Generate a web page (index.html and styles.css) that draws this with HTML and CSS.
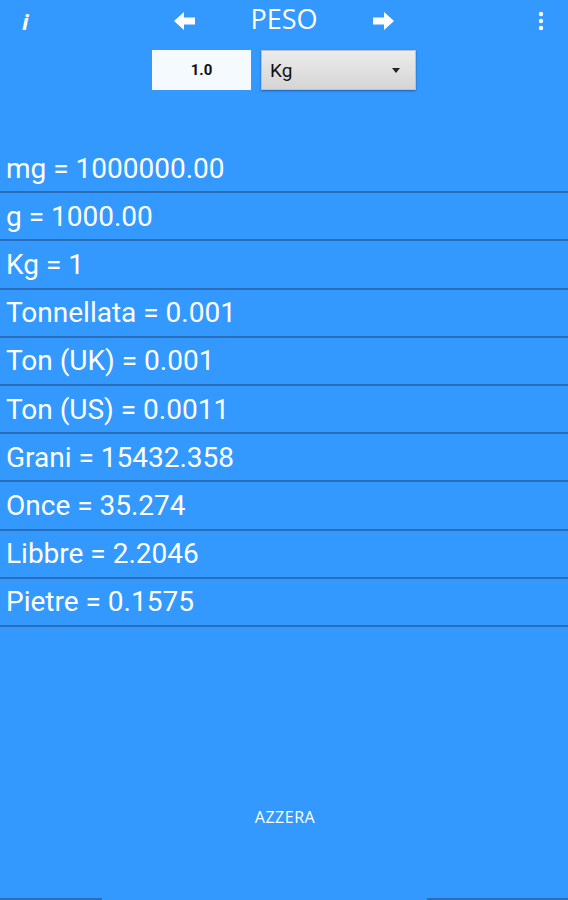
FILE: index.html
```html
<!DOCTYPE html>
<html lang="it">
<head>
    <meta charset="UTF-8">
    <meta name="viewport" content="width=device-width, initial-scale=1.0">
    <title>Peso</title>
    <link rel="stylesheet" href="styles.css">
</head>
<body>

    <!-- Top bar -->
    <div class="top-bar">
        <span class="info-btn">i</span>
        <div class="title-group">
            <svg class="arrow" width="22" height="18" viewBox="0 0 22 18">
                <path d="M0 9 L10 0 L10 5.5 L21 5.5 L21 12.5 L10 12.5 L10 18 Z" fill="#fff"/>
            </svg>
            <span class="title">PESO</span>
            <svg class="arrow" width="22" height="18" viewBox="0 0 22 18">
                <path d="M22 9 L12 0 L12 5.5 L1 5.5 L1 12.5 L12 12.5 L12 18 Z" fill="#fff"/>
            </svg>
        </div>
        <svg class="menu-btn" width="6" height="20" viewBox="0 0 6 20">
            <circle cx="3" cy="3" r="2.2" fill="#fff"/>
            <circle cx="3" cy="10" r="2.2" fill="#fff"/>
            <circle cx="3" cy="17" r="2.2" fill="#fff"/>
        </svg>
    </div>

    <!-- Input -->
    <div class="controls">
        <div class="value-box">1.0</div>
        <div class="unit-select">
            <span>Kg</span>
            <span class="caret"></span>
        </div>
    </div>

    <!-- Results -->
    <ul class="results">
        <li>mg = 1000000.00</li>
        <li>g = 1000.00</li>
        <li>Kg = 1</li>
        <li>Tonnellata = 0.001</li>
        <li>Ton (UK) = 0.001</li>
        <li>Ton (US) = 0.0011</li>
        <li>Grani = 15432.358</li>
        <li>Once = 35.274</li>
        <li>Libbre = 2.2046</li>
        <li>Pietre = 0.1575</li>
    </ul>

    <button class="reset-btn">AZZERA</button>

    <div class="bottom-edge">
        <span class="edge-left"></span>
        <span class="edge-right"></span>
    </div>

</body>
</html>
```

FILE: styles.css
```css
/* General */
html, body {
    height: 100%;
}

body {
    margin: 0;
    background: #3399ff;
    color: white;
    font-family: Roboto, sans-serif;
    display: flex;
    flex-direction: column;
}

/* Top bar */
.top-bar {
    height: 40px;
    display: flex;
    align-items: center;
    justify-content: space-between;
    padding: 0 24px 0 22px;
}

.info-btn {
    font-family: 'Open Sans', sans-serif;
    font-style: italic;
    font-weight: bold;
    font-size: 22px;
    width: 8px;
    line-height: 1;
    margin-top: 2px;
}

.title-group {
    display: flex;
    align-items: center;
}

.arrow {
    margin-top: 2px;
}

.title {
    font-family: 'Open Sans', sans-serif;
    font-size: 27px;
    width: 176px;
    text-align: center;
    line-height: 1;
    margin-top: -4px;
}

.menu-btn {
    margin-top: 2px;
}

/* Controls */
.controls {
    display: flex;
    justify-content: center;
    gap: 10px;
    margin-top: 10px;
}

.value-box {
    width: 99px;
    height: 40px;
    background: #f5faff;
    color: #111;
    font-family: Roboto, sans-serif;
    font-weight: bold;
    font-size: 15px;
    display: flex;
    align-items: center;
    justify-content: center;
}

.unit-select {
    width: 130px;
    height: 38px;
    background: linear-gradient(#ececec, #d5d5d5);
    border: 1px solid #b9c2cc;
    box-shadow: 0 1px 2px rgba(20, 60, 110, 0.6);
    color: #111;
    font-size: 19px;
    display: flex;
    align-items: center;
    justify-content: space-between;
    padding: 0 15px 0 8px;
}

.caret {
    width: 0;
    height: 0;
    border-left: 4.5px solid transparent;
    border-right: 4.5px solid transparent;
    border-top: 5px solid #222;
}

/* Results list */
.results {
    list-style: none;
    margin: 55px 0 0;
    padding: 0;
}

.results li {
    height: 46.2px;
    border-bottom: 2px solid #2b6db9;
    font-size: 28px;
    padding-left: 6px;
    display: flex;
    align-items: center;
}

/* Reset */
.reset-btn {
    align-self: center;
    margin-top: 171px;
    background: none;
    border: none;
    color: white;
    font-family: 'Open Sans', sans-serif;
    font-size: 16px;
    letter-spacing: 0.5px;
    padding: 8px 16px;
    margin-left: 2px;
}

/* Bottom edge */
.bottom-edge {
    margin-top: auto;
    height: 2px;
    display: flex;
    justify-content: space-between;
}

.edge-left {
    width: 102px;
    background: #2b6db9;
}

.edge-right {
    width: 141px;
    background: #2b6db9;
}
```
